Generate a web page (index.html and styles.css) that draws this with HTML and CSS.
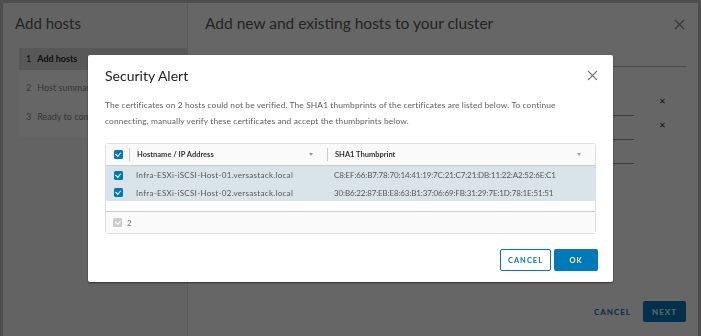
FILE: index.html
```html
<!DOCTYPE html>
<html lang="en">
<head>
    <meta charset="UTF-8">
    <title>Add hosts</title>
    <link rel="stylesheet" href="styles.css">
</head>
<body>
    <!-- Wizard behind the alert -->
    <div class="wizard">
        <div class="sidebar">
            <h2 class="wizard-title">Add hosts</h2>
            <ul class="steps">
                <li class="active"><span>1</span>Add hosts</li>
                <li><span>2</span>Host summary</li>
                <li><span>3</span>Ready to complete</li>
            </ul>
        </div>
        <div class="main">
            <div class="main-head">
                <h2 class="wizard-title">Add new and existing hosts to your cluster</h2>
                <svg class="close-big" width="11" height="11" viewBox="0 0 11 11">
                    <path d="M1 1 L10 10 M10 1 L1 10" stroke="#888" stroke-width="1.1" fill="none"/>
                </svg>
            </div>
            <div class="tabs">New hosts (2) &nbsp; Existing hosts (0 from 2)</div>
            <div class="host-rows">
                <div class="host-row"><div class="field"></div><span class="remove">&#x2715;</span></div>
                <div class="host-row"><div class="field"></div><span class="remove">&#x2715;</span></div>
                <div class="host-row"><div class="field"></div><span class="remove hidden">&#x2715;</span></div>
            </div>
            <div class="wizard-footer">
                <button class="btn-link">CANCEL</button>
                <button class="btn-next">NEXT</button>
            </div>
        </div>
    </div>

    <div class="backdrop"></div>

    <!-- Security Alert -->
    <div class="modal">
        <div class="modal-head">
            <h3>Security Alert</h3>
            <svg class="modal-close" width="11" height="11" viewBox="0 0 11 11">
                <path d="M1 1 L10 10 M10 1 L1 10" stroke="#777" stroke-width="1.1" fill="none"/>
            </svg>
        </div>
        <p class="modal-text">The certificates on 2 hosts could not be verified. The SHA1 thumbprints of the certificates are listed below. To continue connecting, manually verify these certificates and accept the thumbprints below.</p>

        <div class="grid">
            <div class="grid-row grid-header">
                <div class="cell-check"><span class="check"></span></div>
                <div class="cell col-host">Hostname / IP Address <span class="filter"></span></div>
                <div class="cell col-thumb">SHA1 Thumbprint <span class="filter"></span></div>
            </div>
            <div class="grid-row selected">
                <div class="cell-check"><span class="check"></span></div>
                <div class="cell col-host host-name">Infra-ESXi-iSCSI-Host-01.versastack.local</div>
                <div class="cell col-thumb thumb">C8:EF:66:B7:78:70:14:41:19:7C:21:C7:21:DB:11:22:A2:52:6E:C1</div>
            </div>
            <div class="grid-row selected">
                <div class="cell-check"><span class="check"></span></div>
                <div class="cell col-host host-name">Infra-ESXi-iSCSI-Host-02.versastack.local</div>
                <div class="cell col-thumb thumb">30:B6:22:87:EB:E8:63:B1:37:06:69:FB:31:29:7E:1D:78:1E:51:51</div>
            </div>
            <div class="grid-spacer"></div>
            <div class="grid-footer">
                <span class="check disabled"></span> 2
            </div>
        </div>

        <div class="modal-footer">
            <button class="btn-outline">CANCEL</button>
            <button class="btn-primary">OK</button>
        </div>
    </div>
</body>
</html>
```

FILE: styles.css
```css
body {
    margin: 0;
    background-color: #c4c4c4;
    font-family: Lato, "Open Sans", sans-serif;
    height: 336px;
    overflow: hidden;
}

.wizard {
    display: flex;
    margin: 3px 3px 0 3px;
    height: 333px;
    background-color: #fff;
}

.sidebar {
    width: 185px;
    background-color: #f7f7f7;
    border-right: 1px solid #e2e2e2;
    padding-left: 12px;
    box-sizing: border-box;
}

.wizard-title {
    font-size: 15px;
    font-weight: 400;
    color: #5a5a5a;
    margin: 10px 0 0;
    line-height: 20px;
}

.main .wizard-title {
    font-size: 15.5px;
}

.steps {
    list-style: none;
    margin: 15px 0 0 4px;
    padding: 0 0 2px;
    background-color: #fff;
}

.steps li {
    height: 29px;
    line-height: 22px;
    padding-left: 7px;
    font-size: 9px;
    color: #8a8a8a;
}

.steps li span {
    margin-right: 6px;
}

.steps li.active {
    height: 22px;
    margin-bottom: 7px;
    background-color: #dcdcdc;
    color: #2a2a2a;
    font-weight: bold;
}

.steps li.active span {
    font-weight: normal;
}

.main {
    flex: 1;
    padding-left: 17px;
    padding-right: 12px;
    display: flex;
    flex-direction: column;
}

.main-head {
    display: flex;
    justify-content: space-between;
    align-items: flex-start;
}

.close-big {
    margin-top: 16px;
    margin-right: 1px;
}

.tabs {
    margin-top: 22px;
    font-size: 9px;
    color: #888;
    padding-bottom: 0;
    border-bottom: 1px solid #bbb;
}

.host-rows {
    margin-top: 26px;
}

.host-row {
    display: flex;
    align-items: center;
    height: 24px;
}

.field {
    width: 429px;
    height: 20px;
    border-bottom: 1px solid #999;
}

.remove {
    font-size: 8px;
    color: #333;
    margin-left: 25px;
    margin-top: -8px;
}

.remove.hidden {
    visibility: hidden;
}

.wizard-footer {
    margin-top: auto;
    margin-bottom: 14px;
    display: flex;
    justify-content: flex-end;
    align-items: center;
    gap: 8px;
}

.btn-link, .btn-next {
    font-family: Lato, "Open Sans", sans-serif;
    font-size: 8px;
    font-weight: bold;
    letter-spacing: 1px;
    border: none;
    height: 21px;
    border-radius: 2px;
}

.btn-link {
    background: none;
    color: #0079b8;
    padding: 0 4px;
}

.btn-next {
    width: 43px;
    background-color: #0079b8;
    color: #fff;
}

.backdrop {
    position: fixed;
    inset: 0;
    background-color: rgba(0, 0, 0, 0.6);
}

.modal {
    position: fixed;
    left: 88px;
    top: 55px;
    width: 525px;
    height: 227px;
    box-sizing: border-box;
    padding: 0 17px 0 17px;
    background-color: #fff;
    border-radius: 2px;
    box-shadow: 0 1px 2px rgba(0, 0, 0, 0.5);
}

.modal-head {
    display: flex;
    justify-content: space-between;
    align-items: center;
    height: 40px;
}

.modal-head h3 {
    margin: 0;
    font-size: 14px;
    font-weight: 400;
    color: #222;
    letter-spacing: 0;
}

.modal-close {
    margin-right: -2px;
}

.modal-text {
    margin: 2px 0 0;
    max-width: 458px;
    font-size: 8.4px;
    line-height: 16px;
    letter-spacing: 0.12px;
    color: #5e5e5e;
}

.grid {
    margin-top: 14px;
    border: 1px solid #ddd;
    border-radius: 3px;
    font-size: 8px;
    color: #565656;
}

.grid-row {
    display: flex;
    height: 18px;
    align-items: center;
}

.grid-header {
    height: 21px;
    background-color: #fafafa;
    border-bottom: 1px solid #ccc;
    font-weight: bold;
    font-size: 7.5px;
    color: #333;
}

.grid-row.selected {
    background-color: #d9e4ea;
}

.grid-row.selected + .grid-row.selected {
    height: 17px;
}

.host-name {
    letter-spacing: 0.3px;
}

.thumb {
    letter-spacing: -0.13px;
}

.cell-check {
    width: 22px;
    height: 100%;
    display: flex;
    align-items: center;
    justify-content: center;
    padding-left: 1px;
}

.grid-header .cell-check {
    height: 13px;
    border-right: 1px solid #ccc;
}

.cell {
    padding-left: 7px;
    box-sizing: border-box;
    display: flex;
    align-items: center;
    height: 100%;
}

.col-host {
    width: 198px;
}

.col-thumb {
    flex: 1;
}

.grid-header .cell {
    justify-content: space-between;
    height: 13px;
}

.grid-header .col-host {
    border-right: 1px solid #ccc;
}

.filter {
    width: 0;
    height: 0;
    border-left: 2.5px solid transparent;
    border-right: 2.5px solid transparent;
    border-top: 3px solid #999;
    margin-right: 14px;
}

.check {
    display: inline-block;
    width: 9px;
    height: 9px;
    border-radius: 1.5px;
    background-color: #0079b8;
    position: relative;
}

.check::after {
    content: "";
    position: absolute;
    left: 2.5px;
    top: 1.3px;
    width: 2.5px;
    height: 4.2px;
    border-right: 1.3px solid #fff;
    border-bottom: 1.3px solid #fff;
    transform: rotate(40deg);
}

.check.disabled {
    background-color: #ccc;
}

.grid-spacer {
    height: 10px;
    border-bottom: 1px solid #ccc;
}

.grid-footer {
    height: 21px;
    background-color: #fafafa;
    display: flex;
    align-items: center;
    gap: 5px;
    padding-left: 7px;
    color: #777;
    font-size: 8px;
}

.modal-footer {
    display: flex;
    justify-content: flex-end;
    gap: 3px;
    margin-top: 15px;
    margin-right: -2px;
}

.btn-outline, .btn-primary {
    font-family: Lato, "Open Sans", sans-serif;
    font-size: 7.5px;
    font-weight: bold;
    letter-spacing: 1px;
    height: 22px;
    border-radius: 2px;
    box-sizing: border-box;
}

.btn-outline {
    width: 51px;
    background-color: #fff;
    border: 1px solid #0079b8;
    color: #0079b8;
}

.btn-primary {
    width: 44px;
    border: none;
    background-color: #0079b8;
    color: #fff;
}
```
